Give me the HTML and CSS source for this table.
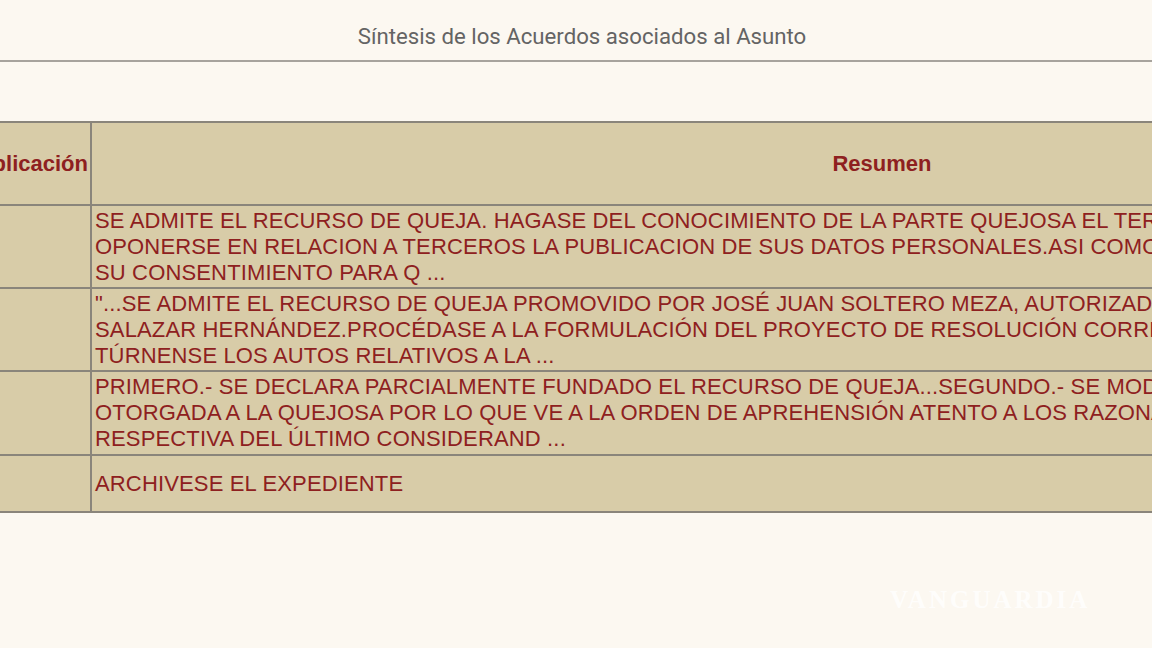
FILE: index.html
```html
<!DOCTYPE html>
<html lang="es">
<head>
<meta charset="utf-8">
<title>Síntesis de los Acuerdos</title>
<link rel="stylesheet" href="styles.css">
</head>
<body>
<header class="title-bar">
  <h1 class="title">Síntesis de los Acuerdos asociados al Asunto</h1>
</header>
<main class="content">
  <table class="acuerdos">
    <thead>
      <tr class="head-row">
        <th class="col-fecha">Fecha de Publicación</th>
        <th class="col-resumen">Resumen</th>
      </tr>
    </thead>
    <tbody>
      <tr class="row-3">
        <td class="col-fecha">27/04/2018</td>
        <td class="col-resumen">SE ADMITE EL RECURSO DE QUEJA. HAGASE DEL CONOCIMIENTO DE LA PARTE QUEJOSA EL TERMINO DE TRES DIAS PARA<br>OPONERSE EN RELACION A TERCEROS LA PUBLICACION DE SUS DATOS PERSONALES.ASI COMO SE LE REQUIERE PARA QUE MANIFIESTE<br>SU CONSENTIMIENTO PARA Q ...</td>
      </tr>
      <tr class="row-3">
        <td class="col-fecha">04/05/2018</td>
        <td class="col-resumen">"...SE ADMITE EL RECURSO DE QUEJA PROMOVIDO POR JOSÉ JUAN SOLTERO MEZA, AUTORIZADO DE LA QUEJOSA<br>SALAZAR HERNÁNDEZ.PROCÉDASE A LA FORMULACIÓN DEL PROYECTO DE RESOLUCIÓN CORRESPONDIENTE.<br>TÚRNENSE LOS AUTOS RELATIVOS A LA ...</td>
      </tr>
      <tr class="row-3 row-3b">
        <td class="col-fecha">22/06/2018</td>
        <td class="col-resumen">PRIMERO.- SE DECLARA PARCIALMENTE FUNDADO EL RECURSO DE QUEJA...SEGUNDO.- SE MODIFICA LA SUSPENSIÓN<br>OTORGADA A LA QUEJOSA POR LO QUE VE A LA ORDEN DE APREHENSIÓN ATENTO A LOS RAZONAMIENTOS<br>RESPECTIVA DEL ÚLTIMO CONSIDERAND ...</td>
      </tr>
      <tr class="row-1">
        <td class="col-fecha">09/07/2018</td>
        <td class="col-resumen">ARCHIVESE EL EXPEDIENTE</td>
      </tr>
    </tbody>
  </table>
</main>
<span class="watermark">VANGUARDIA</span>
</body>
</html>
```

FILE: styles.css
```css
html, body {
  margin: 0;
  padding: 0;
}

body {
  width: 1152px;
  height: 648px;
  overflow: hidden;
  background: #fcf8f1;
  position: relative;
  font-family: "Liberation Sans", Arial, sans-serif;
}

.title-bar {
  border-bottom: 2px solid #a7a39d;
  display: flex;
  align-items: flex-start;
  justify-content: center;
  padding-left: 12px;
  box-sizing: border-box;
  height: 62px;
}

.title {
  margin: 0;
  padding-top: 22px;
  font-family: Roboto, "Liberation Sans", sans-serif;
  font-weight: 400;
  font-size: 22.2px;
  line-height: 28px;
  color: #646464;
}

.content {
  padding-top: 59px;
}

.acuerdos {
  border-collapse: collapse;
  background: #d8cca8;
  margin-left: -141px;
  width: 1815px;
  table-layout: fixed;
  color: #8e2020;
  font-size: 22px;
  line-height: 26px;
  letter-spacing: 0.15px;
}

.acuerdos th,
.acuerdos td {
  border: 2px solid #8a857b;
  padding: 1px 3px;
  white-space: nowrap;
  overflow: hidden;
  vertical-align: middle;
}

.acuerdos th {
  font-weight: 700;
  text-align: center;
  letter-spacing: 0;
}

.acuerdos td {
  text-align: left;
}

.acuerdos .col-fecha {
  width: 225px;
  padding-left: 2px;
  padding-right: 2px;
}

.acuerdos td.col-fecha {
  color: transparent;
}

.head-row th {
  height: 79px;
}

.row-3 td {
  height: 79px;
}

.row-3b td {
  height: 80px;
}

.row-1 td {
  height: 53px;
}

.watermark {
  position: absolute;
  left: 890px;
  top: 586px;
  font-family: "Liberation Serif", serif;
  font-weight: 700;
  font-size: 25px;
  letter-spacing: 3px;
  color: rgba(255, 255, 255, 0.8);
}
```
